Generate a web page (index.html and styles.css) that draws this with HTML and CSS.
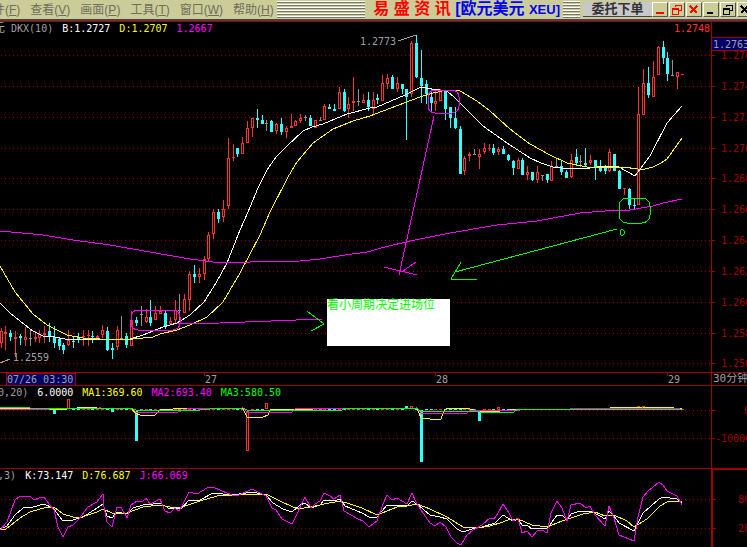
FILE: index.html
```
<!DOCTYPE html>
<html lang="zh-CN">
<head>
  <meta charset="utf-8">
  <title>易盛资讯 [欧元美元 XEU]</title>
  <link rel="stylesheet" href="styles.css">
</head>
<body>
  <header class="toolbar">
    <nav class="menu">
      <a href="#">文件(<u>F</u>)</a>
      <a href="#">查看(<u>V</u>)</a>
      <a href="#">画面(<u>P</u>)</a>
      <a href="#">工具(<u>T</u>)</a>
      <a href="#">窗口(<u>W</u>)</a>
      <a href="#">帮助(<u>H</u>)</a>
    </nav>
    <div class="grip"></div>
    <h1 class="title"><span class="brand">易 盛 资 讯</span> <span class="symbol">[欧元美元 <small>XEU]</small></span></h1>
    <div class="grip grip-small"></div>
    <button class="order-btn" type="button">委托下单</button>
    <div class="win-buttons">
      <button class="win red" type="button" aria-label="最小化"><svg viewBox="0 0 13 11"><path d="M3 9h8"/></svg></button>
      <button class="win red" type="button" aria-label="还原"><svg viewBox="0 0 13 11"><path d="M5 3V1h6v5H9M2 5h6v5H2zM2 4h7M5 1h6"/></svg></button>
      <button class="win red" type="button" aria-label="关闭"><svg viewBox="0 0 13 11"><path d="M3 2l7 7M10 2l-7 7"/></svg></button>
      <button class="win" type="button" aria-label="最小化子窗口"><svg viewBox="0 0 13 11"><path d="M3 9h6"/></svg></button>
      <button class="win" type="button" aria-label="还原子窗口"><svg viewBox="0 0 13 11"><path d="M5 3V1h6v5H9M2 5h6v5H2zM2 4h7M5 1h6"/></svg></button>
      <button class="win" type="button" aria-label="关闭子窗口"><svg viewBox="0 0 13 11"><path d="M3 2l7 7M10 2l-7 7"/></svg></button>
    </div>
  </header>

  <main class="charts">
    <!-- price -->
    <section class="pane">
      <div class="legend legend-price">
        <span class="gray"><span class="name">欧元</span> DKX(10)</span>
        <span class="white">B:1.2727</span>
        <span class="yellow">D:1.2707</span>
        <span class="magenta">1.2667</span>
        <span class="last">1.2748</span>
      </div>
      <svg class="plot plot-price">
        <g transform="translate(0 -35)">
          <g id="priceGrid"></g>
          <g id="candles"></g>
          <polyline class="line white-line" points="0,303 10,313 25,325 33,331 43,336 55,337 70,340 100,339 130,339 143,335 163,327 177,323 190,315 204,302 216,283 227,263 240,230 248,212 258,188 267,170 276,157 287,146 303,131 312,127 323,124 347,114 370,108 377,107 405,95 421,87 432,89 447,91 455,98 465,108 483,126 507,143 530,158 541,163 553,167 570,169 590,168 605,166 617,166 628,172 635,176 650,156 667,123 682,106"/>
          <polyline class="line yellow-line" points="0,266 15,292 33,314 47,325 67,335 83,338 100,339 133,339 153,337 160,334 177,330 190,325 207,317 223,302 240,273 260,235 270,212 288,177 297,162 313,143 333,129 353,121 370,116 383,111 420,97 433,93 447,90 460,91 477,101 490,111 510,129 530,144 550,155 567,163 587,167 623,167 638,169 645,169 653,167 661,163 667,159 682,138"/>
          <polyline class="line magenta-line" points="0,231 22,233 43,235 73,240 110,245 150,252 190,259 213,262 250,262 300,261 320,259 345,255 367,252 385,247 410,241 450,233 497,225 537,221 580,213 605,211 630,210 653,206 663,203 682,199"/>

          <path class="line gray-line" d="M398 41L416 35M0 363L10 359"/>
          <text class="gray" x="360" y="45">1.2773</text>
          <text class="gray" x="13" y="361">1.2559</text>

          <rect class="line magenta-line" x="131" y="310" width="49" height="20" rx="7"/>
          <rect class="line magenta-line" x="428" y="90" width="31" height="23" rx="7"/>
          <path class="line magenta-line" d="M177 324L220 323L322 319M434 116L399 275M384 267L417 275M416 262L403 271"/>
          <rect class="line green-line" x="619" y="198" width="31" height="25" rx="8"/>
          <path class="line green-line" d="M617 229L455 272M461 262L451 279L477 280M307 311L324 324L311 331M622 229L624 231V234L622 236L620 234V231Z"/>

          <rect class="note" x="327" y="299" width="123" height="47"/>
          <text class="note-text" x="327" y="309">看小周期决定进场位</text>
        </g>
      </svg>
    </section>
    <svg class="axis axis-price" id="priceAxis"></svg>

    <!-- dates -->
    <svg class="dates">
      <rect class="tag" x="6" y="0" width="69" height="12"/>
      <text class="gray" x="7" y="10">07/26 03:30</text>
      <path class="tick" d="M204 0v3M435 0v3M667 0v3"/>
      <text class="gray" x="205" y="10">27</text>
      <text class="gray" x="436" y="10">28</text>
      <text class="gray" x="668" y="10">29</text>
    </svg>
    <div class="period">30分钟</div>

    <!-- volume -->
    <section class="pane">
      <div class="legend legend-vol">
        <span class="gray">VOL(10,20)</span>
        <span class="white">6.0000</span>
        <span class="yellow">MA1:369.60</span>
        <span class="magenta">MA2:693.40</span>
        <span class="green">MA3:580.50</span>
      </div>
      <svg class="plot plot-vol">
        <g transform="translate(0 -399)">
          <g id="volGrid"></g>
          <g id="volumes"></g>
          <polyline class="line yellow-line" points="0,408 50,409 57,410 77,408 87,407 97,408 132,409 135,413 140,415 155,415 160,410 187,408 200,408 243,409 247,417 263,417 268,415 271,409 313,409 417,408 421,418 430,419 441,419 444,411 447,408 467,408 477,411 500,411 520,409 577,409 643,407 665,407 682,409"/>
          <polyline class="line magenta-line" points="0,410 50,409 100,408 133,409 136,412 178,412 187,409 243,408 247,412 292,412 296,408 312,408 340,409 417,408 421,413 450,413 466,414 470,410 520,410 570,409 682,408"/>
          <polyline class="line green-line" points="0,407 28,407 30,408 130,408 136,410 200,410 210,409 243,408 247,410 320,410 341,411 345,408 416,408 421,411 475,411 480,412 514,412 518,409 682,409"/>
        </g>
      </svg>
    </section>
    <svg class="axis axis-vol" id="volAxis"></svg>

    <!-- KDJ -->
    <section class="pane pane-kdj">
      <div class="legend legend-kdj">
        <span class="gray">(9,3,3)</span>
        <span class="white">K:73.147</span>
        <span class="yellow">D:76.687</span>
        <span class="magenta">J:66.069</span>
      </div>
      <svg class="plot plot-kdj">
        <g transform="translate(0 -482)">
          <g id="kdjGrid"></g>
          <polyline class="line white-line" points="0,529 7,526 15,515 23,508 33,507 44,504 53,508 63,521 73,520 83,517 97,508 103,504 107,516 112,518 117,512 127,514 133,508 143,505 153,504 160,503 170,509 182,508 189,500 200,500 213,493 233,495 252,492 266,495 273,503 283,509 292,512 300,505 305,503 311,508 320,505 324,500 334,501 340,499 345,506 362,513 369,517 377,517 387,505 397,505 407,506 412,501 417,504 430,515 440,517 447,519 457,529 463,532 472,529 482,527 495,523 503,515 513,521 518,519 522,525 528,526 532,529 537,528 547,529 557,515 562,515 567,520 571,514 580,511 590,511 600,516 605,519 609,511 614,516 619,523 634,531 643,513 659,499 663,497 677,499 682,503"/>
          <polyline class="line yellow-line" points="0,530 6,529 20,518 30,512 47,507 54,507 63,514 73,517 82,517 97,512 103,509 112,513 127,513 143,507 160,505 170,507 182,507 200,501 217,496 239,495 252,494 266,494 280,501 293,507 298,509 311,507 324,504 340,501 350,504 362,508 377,515 397,507 407,506 417,504 430,509 447,517 463,527 477,528 490,526 503,522 510,519 518,519 532,525 547,527 562,521 571,518 583,514 595,512 605,516 614,515 627,521 634,527 647,519 660,506 667,502 682,501"/>
          <polyline class="line magenta-line" points="0,530 7,522 15,500 20,496 30,496 34,500 39,498 44,497 49,504 54,510 58,527 63,537 68,527 73,525 79,519 88,507 97,502 103,494 104,507 107,522 112,527 117,507 121,507 127,518 131,505 137,501 143,501 146,498 150,504 160,499 165,511 170,513 175,508 179,511 183,504 189,492 197,494 207,488 213,487 222,491 232,495 239,495 252,489 258,492 266,496 272,508 276,510 282,519 292,524 295,518 305,497 311,508 315,504 320,501 324,493 330,496 334,499 340,495 344,511 358,519 363,521 369,527 377,521 383,504 387,495 392,500 397,498 407,504 412,493 417,504 421,510 430,523 435,526 440,522 446,527 451,537 457,543 461,545 467,535 473,530 482,525 490,518 494,519 498,513 503,504 509,513 513,521 518,518 522,533 527,531 532,537 537,531 542,530 547,533 551,513 557,501 562,508 567,521 571,505 580,503 586,508 590,506 595,515 605,526 609,506 614,518 619,535 624,537 634,541 638,517 643,497 648,491 653,487 659,482 663,485 667,491 677,496 682,505"/>
        </g>
      </svg>
    </section>
    <svg class="axis axis-kdj" id="kdjAxis"></svg>
  </main>
  <script src="script.js"></script>
</body>
</html>
```

FILE: styles.css
```
html, body {
  height: 100%;
}
body {
  margin: 0;
  display: flex;
  flex-direction: column;
  overflow: hidden;
  background: #000;
  font-family: "DejaVu Sans Mono", "Noto Sans CJK SC", monospace;
  font-size: 10px;
  line-height: 13px;
}

/* toolbar */
.toolbar {
  display: flex;
  flex: none;
  align-items: center;
  height: 19px;
  background: #cccc99;
  border-bottom: 2px solid #444;
  font-family: "Liberation Sans", "Noto Sans CJK SC", sans-serif;
  white-space: nowrap;
}
.menu {
  display: flex;
  flex: none;
  gap: 10px;
  margin-left: -19px;
}
.menu a {
  color: #6e6e5c;
  font-size: 12px;
  line-height: 18px;
  text-decoration: none;
}
.grip {
  flex: 1;
  height: 17px;
  margin-left: 3px;
  background: repeating-linear-gradient(#fff 0 1px, #77776a 1px 2px, #cccc99 2px 3px);
}
.grip-small {
  flex: none;
  width: 17px;
  margin-left: 3px;
}
.title {
  flex: none;
  margin: 0 0 0 8px;
  font-size: 16px;
  line-height: 18px;
}
.brand {
  color: #f00;
}
.symbol {
  color: #00f;
}
.symbol small {
  font-size: 13px;
}
.order-btn {
  flex: none;
  width: 69px;
  height: 15px;
  margin-left: 3px;
  padding: 0;
  border: none;
  border-bottom: 1px solid #444;
  background: #c8c8c8;
  color: #333;
  font-family: inherit;
  font-size: 13px;
  font-weight: bold;
  line-height: 14px;
}
.win-buttons {
  display: flex;
  flex: none;
  gap: 1px;
  width: 95px;
}
.win {
  flex: none;
  width: 16px;
  height: 15px;
  padding: 0;
  border: 1px solid;
  border-color: #fff #555 #555 #fff;
  background: #cccc99;
  color: #000;
}
.win.red {
  color: #f00;
}
.win svg {
  display: block;
  width: 13px;
  height: 11px;
  margin: 1px 0;
}
.win path {
  fill: none;
  stroke: currentColor;
  stroke-width: 2;
}
.win:nth-child(3n+2) path {
  stroke-width: 1;
}

/* chart grid, one row per pane */
.charts {
  display: grid;
  flex: 1;
  min-height: 0;
  grid-template-columns: minmax(0, 1fr) 36px;
  grid-template-rows: auto auto auto 1fr;
  border-top: 1px solid #a00000;
}
.charts > * {
  border-bottom: 1px solid #a00000;
}
.charts > .pane-kdj,
.charts > .axis-kdj {
  border-bottom: none;
}
.legend {
  display: flex;
  gap: 9px;
  height: 13px;
  white-space: nowrap;
}
.legend-price {
  margin-left: -19px;
}
.legend-vol {
  margin-left: -32px;
}
.legend-kdj {
  margin-left: -26px;
}
.name {
  font-size: 12px;
}
.last {
  margin-left: auto;
  padding-right: 1px;
  color: #ff3232;
}

svg {
  display: block;
  overflow: hidden;
  shape-rendering: crispEdges;
}
.plot {
  width: 100%;
}
.plot-price {
  height: 337px;
}
.plot-vol {
  height: 69px;
}
.plot-kdj {
  height: 65px;
}
.dates {
  width: 100%;
  height: 12px;
}
.axis {
  width: 35px;
  border-left: 1px solid #a00000;
}
.axis-price {
  height: 350px;
}
.axis-vol {
  height: 82px;
}
.axis-kdj {
  width: 34px;
  height: 77px;
  border-left-width: 2px;
  border-top: 1px solid #a00000;
}
.period {
  overflow: hidden;
  height: 12px;
  padding-left: 1px;
  border-left: 1px solid #a00000;
  color: #a0a0a0;
  font-size: 11px;
  line-height: 12px;
  white-space: nowrap;
}

.gray { color: #a0a0a0; fill: #a0a0a0; }
.white { color: #fff; }
.yellow { color: #ff0; }
.magenta { color: #f0f; }
.green { color: #0f0; }

.line {
  fill: none;
  stroke-width: 1;
}
.white-line { stroke: #fff; }
.yellow-line { stroke: #ff0; }
.magenta-line { stroke: #f0f; }
.green-line { stroke: #0f0; }
.gray-line { stroke: #a0a0a0; }

.grid-line {
  stroke: #a00000;
  stroke-dasharray: 1 3;
}
.tick {
  fill: none;
  stroke: #a00000;
}
.scale {
  fill: #a00000;
}
.tag {
  fill: #000066;
  stroke: #a00000;
}
.up { fill: #ff3232; }
.down { fill: #32ffff; }
.flat { fill: #909090; }
.hollow { fill: #000; }
.note { fill: #fff; }
.note-text {
  fill: #0f0;
  font-family: "Noto Sans CJK SC", sans-serif;
  font-size: 12px;
}
```

FILE: script.js
```
const NS = "http://www.w3.org/2000/svg";

// x, high, low, body top, body bottom, kind (u = up, d = down, f = flat)
const candles = [
  [1,328,348,331,343,"u"],[5,326,350,332,334,"u"],[10,330,341,333,337,"d"],[15,331,357,337,339,"u"],
  [20,334,345,336,338,"d"],[25,327,346,337,340,"u"],[30,330,346,338,339,"f"],[35,331,342,337,339,"u"],
  [39,330,343,334,338,"u"],[44,326,343,333,335,"u"],[49,323,342,331,337,"d"],[54,326,348,337,343,"d"],
  [59,337,350,339,346,"d"],[63,343,354,345,350,"d"],[68,330,346,340,345,"u"],[73,337,348,341,342,"d"],
  [78,333,343,337,339,"d"],[83,330,346,336,337,"u"],[88,330,346,335,336,"u"],[92,331,343,336,337,"d"],
  [97,335,338,336,338,"u"],[102,325,338,330,335,"u"],[107,327,351,331,350,"d"],[112,343,359,348,350,"d"],
  [117,326,350,330,347,"u"],[121,316,339,338,339,"f"],[126,333,348,336,345,"d"],[131,311,346,320,346,"u"],
  [136,317,326,320,323,"d"],[141,306,326,314,315,"f"],[146,309,323,317,322,"u"],[150,300,326,317,323,"d"],
  [155,306,320,313,320,"u"],[160,306,314,311,314,"u"],[165,311,329,313,326,"d"],[170,317,325,321,324,"u"],
  [175,300,323,310,320,"u"],[179,294,322,310,311,"f"],[184,294,313,299,313,"u"],[189,271,311,274,300,"u"],
  [194,265,283,274,277,"d"],[199,268,283,274,277,"u"],[204,256,280,259,274,"u"],[208,232,261,235,259,"u"],
  [213,209,239,212,234,"u"],[218,209,223,212,219,"d"],[223,200,222,209,217,"u"],[228,138,209,158,206,"u"],
  [233,144,161,157,158,"u"],[237,148,157,148,154,"d"],[242,137,154,143,154,"u"],[247,121,143,128,143,"u"],
  [252,118,137,118,128,"u"],[257,109,128,118,120,"d"],[262,115,124,120,124,"d"],[266,120,131,123,124,"f"],
  [271,120,132,121,132,"d"],[276,123,134,124,131,"u"],[281,118,135,124,132,"d"],[286,126,138,128,132,"u"],
  [291,114,128,126,128,"u"],[295,120,126,121,126,"u"],[300,114,123,118,121,"u"],[305,115,121,117,118,"f"],
  [310,115,126,118,126,"d"],[315,120,128,120,128,"u"],[320,117,121,120,121,"f"],[324,104,120,106,120,"u"],
  [329,104,109,107,109,"d"],[334,104,111,109,111,"d"],[339,87,109,92,109,"u"],[344,89,112,92,111,"d"],
  [348,97,118,104,109,"u"],[353,77,111,101,103,"u"],[358,89,106,101,102,"f"],[363,94,103,100,103,"u"],
  [368,92,111,100,107,"d"],[373,92,115,100,109,"u"],[377,94,104,98,100,"d"],[382,75,101,83,101,"u"],
  [387,74,89,78,84,"u"],[392,75,89,77,89,"d"],[397,77,92,83,89,"u"],[402,84,94,84,89,"d"],
  [406,89,140,89,97,"d"],[411,41,97,43,94,"u"],[416,35,78,43,77,"d"],[421,50,103,78,86,"d"],
  [426,80,104,84,94,"d"],[431,88,112,97,103,"d"],[435,91,111,101,104,"u"],[440,89,101,91,101,"u"],
  [445,91,120,91,109,"d"],[450,107,128,107,118,"d"],[455,107,129,118,128,"d"],[460,126,174,129,174,"d"],
  [464,156,175,158,171,"u"],[469,152,161,154,156,"u"],[474,149,155,154,155,"f"],[479,149,169,154,157,"u"],
  [484,143,154,148,152,"u"],[489,144,151,148,149,"u"],[493,144,155,148,153,"d"],[498,147,155,149,152,"u"],
  [503,146,154,149,154,"d"],[508,154,161,155,160,"d"],[513,160,175,161,168,"d"],[518,158,169,160,169,"u"],
  [522,158,175,160,175,"d"],[527,166,180,172,175,"u"],[532,172,181,172,180,"d"],[537,166,183,172,180,"u"],
  [542,175,181,175,176,"f"],[547,174,183,174,180,"d"],[551,161,181,166,181,"u"],[556,159,167,166,167,"f"],
  [561,161,175,166,172,"d"],[566,170,178,172,178,"d"],[571,154,178,160,177,"u"],[576,149,166,157,163,"d"],
  [580,155,167,161,162,"f"],[585,148,166,163,165,"d"],[590,155,165,160,163,"u"],[595,160,180,160,168,"d"],
  [600,160,172,166,171,"d"],[605,165,174,168,171,"d"],[609,149,172,152,171,"u"],[614,154,171,154,171,"d"],
  [619,170,189,171,189,"d"],[624,188,195,188,189,"u"],[629,188,209,189,205,"d"],[634,198,209,205,206,"d"],
  [638,87,205,114,205,"u"],[643,69,115,83,115,"u"],[648,67,98,83,95,"d"],[653,61,97,77,97,"u"],
  [658,46,75,47,75,"u"],[663,41,64,47,58,"d"],[667,52,81,58,74,"d"],[672,60,76,75,76,"f"],
  [677,72,89,72,77,"u"],[682,74,75,74,75,"u"]
];

// bars that stand out from the zero line: x -> top, bottom, kind
const volumes = {
  54: [409,414,"d"], 68: [399,409,"u"], 112: [409,412,"d"], 136: [411,441,"d"], 247: [411,451,"u"],
  266: [403,409,"u"], 406: [406,409,"d"], 411: [406,409,"u"], 421: [410,462,"d"], 479: [412,421,"d"],
  498: [407,410,"u"], 638: [406,409,"u"], 643: [406,409,"u"]
};

const kinds = { u: "up", d: "down", f: "flat" };

function add(parent, name, attrs, text) {
  const el = document.createElementNS(NS, name);
  for (const key in attrs) el.setAttribute(key, attrs[key]);
  if (text) el.textContent = text;
  document.getElementById(parent).appendChild(el);
}

function box(parent, cls, x, y, w, h) {
  add(parent, "rect", { class: cls, x: x, y: y, width: w, height: h });
}

function body(parent, x, top, bottom, kind) {
  const h = bottom - top;
  if (kind === "u") {
    box(parent, "up", x - 1, top, 3, h);
    if (h > 2) box(parent, "hollow", x, top + 1, 1, h - 2);
  } else if (kind === "d") {
    box(parent, "down", x - 1, top, 3, h);
  } else {
    box(parent, "flat", x - 1, top, 3, h);
  }
}

candles.forEach(function (c) {
  const [x, high, low, top, bottom, kind] = c;
  box("candles", kinds[kind], x, high, 1, low - high);
  body("candles", x, top, bottom, kind);
  if (volumes[x]) {
    body("volumes", x, ...volumes[x]);
  } else {
    box("volumes", kinds[kind], x - 1, 409, 3, 1);
  }
});

function gridLine(parent, y) {
  add(parent, "line", { class: "grid-line", x1: 1, x2: "100%", y1: y + 0.5, y2: y + 0.5 });
}

function scale(parent, y, x, label) {
  add(parent, "path", { class: "tick", d: "M0 " + (y + 0.5) + "h3" });
  add(parent, "text", { class: "scale", x: x, y: y + 4 }, label);
}

[55, 86, 117, 148, 178, 209, 240, 271, 302, 333, 363].forEach(function (y, i) {
  gridLine("priceGrid", y);
  scale("priceAxis", y - 22, 9, (1.276 - i * 0.002).toFixed(3));
});
add("priceAxis", "rect", { class: "tag", x: -1, y: 15, width: 40, height: 13 });
add("priceAxis", "text", { class: "gray", x: 1, y: 26 }, "1.2763");

gridLine("volGrid", 410);
gridLine("volGrid", 438);
scale("volAxis", 24, 32, "0");
scale("volAxis", 52, 3, "-10000");

gridLine("kdjGrid", 499);
gridLine("kdjGrid", 528);
scale("kdjAxis", 29, 25, "80");
scale("kdjAxis", 58, 25, "20");
```
